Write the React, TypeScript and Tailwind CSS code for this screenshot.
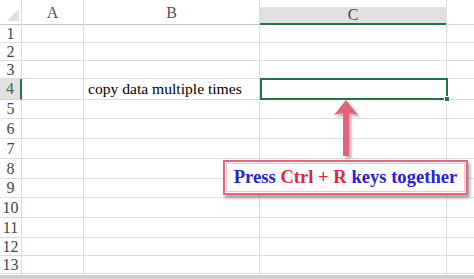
const cols = ['', 'A', 'B', 'C', ''];
const rowHeights = [18, 18, 18, 21, 19, 20, 20, 20, 19, 20, 20, 18, 18, 10];

function Arrow() {
  return (
    <svg className="absolute left-[330px] top-[98px]" width="34" height="64" viewBox="0 0 34 64">
      <defs>
        <filter id="sh" x="-30%" y="-30%" width="160%" height="160%">
          <feGaussianBlur stdDeviation="1.2" />
        </filter>
      </defs>
      <g transform="translate(2.5,2.5)" fill="#9a9a9a" opacity="0.7" filter="url(#sh)">
        <path d="M16 2 L28 17 L19 15 L19 58 L13 58 L13 15 L4 17 Z" />
      </g>
      <path d="M16 2 L28 17 L19 15 L19 58 L13 58 L13 15 L4 17 Z" fill="#e6627b" />
    </svg>
  );
}

export default function App() {
  return (
    <div className="relative w-[474px] h-[279px] overflow-hidden bg-white font-['Liberation_Serif',serif]">
      <div className="grid grid-cols-[22px_62px_176px_187px_1fr]">
        {cols.map((c, i) => (
          <div key={'h' + i} className={`h-[25px] border-r border-[#dcdcdc] ${i === 4 ? 'border-r-0' : ''}`}>
            {i === 0 && (
              <div className="flex h-full items-end justify-end border-b border-[#c6c6c6] pb-[3px] pr-[2px]">
                <div className="h-0 w-0 border-b-[12px] border-l-[12px] border-b-[#dedede] border-l-transparent" />
              </div>
            )}
            {(i === 1 || i === 2) && (
              <div className="flex h-full items-end justify-center border-b border-[#c6c6c6] pb-[3px] text-[16px] leading-none text-[#555]">
                {c}
              </div>
            )}
            {i === 3 && (
              <div className="mt-[7px] flex h-[18px] items-center justify-center border-b-2 border-[#217346] bg-[#e1e1e1] text-[16px] leading-none text-[#4a4a4a]">
                {c}
              </div>
            )}
            {i === 4 && <div className="h-full border-b border-[#dcdcdc]" />}
          </div>
        ))}
        {rowHeights.map((h, r) => (
          <Row key={r} n={r + 1} h={h} />
        ))}
      </div>

      <div className="absolute left-[260px] top-[78px] h-[22px] w-[188px] border-2 border-[#217346]" />
      <div className="absolute left-[444px] top-[96px] h-[6px] w-[6px] border border-white bg-[#217346]" />

      <Arrow />

      <div className="absolute left-[223px] top-[160px] h-[35px] w-[245px] border-2 border-[#e0667e] bg-white p-px shadow-[2px_3px_3px_rgba(0,0,0,0.35)]">
        <div className="flex h-full items-center justify-center border border-[#f3c3cc] text-[18.6px] font-bold leading-none text-[#2323cf] whitespace-nowrap">
          Press&nbsp;<span className="text-[#e5223f]">Ctrl + R</span>&nbsp;keys together
        </div>
      </div>

      <div className="absolute bottom-0 left-0 h-[4px] w-full bg-[#cfcfcf]" />
    </div>
  );
}

function Row({ n, h }: { n: number; h: number }) {
  const sel = n === 4;
  const line = 'border-b border-r border-[#dcdcdc]';
  return (
    <>
      <div
        style={{ height: h }}
        className={`flex items-center justify-center text-[16px] leading-none ${
          sel ? 'border-b border-r-2 border-b-[#d0d0d0] border-r-[#217346] bg-[#e1e1e1] text-[#3f6b4e]' : `${line} text-[#444]`
        }`}
      >
        {n < 14 ? n : ''}
      </div>
      <div style={{ height: h }} className={line} />
      <div style={{ height: h }} className={`${line} flex items-center pl-[4px] text-[15.6px] leading-none text-black whitespace-nowrap`}>
        {sel ? 'copy data multiple times' : ''}
      </div>
      <div style={{ height: h }} className={line} />
      <div style={{ height: h }} className="border-b border-[#dcdcdc]" />
    </>
  );
}
